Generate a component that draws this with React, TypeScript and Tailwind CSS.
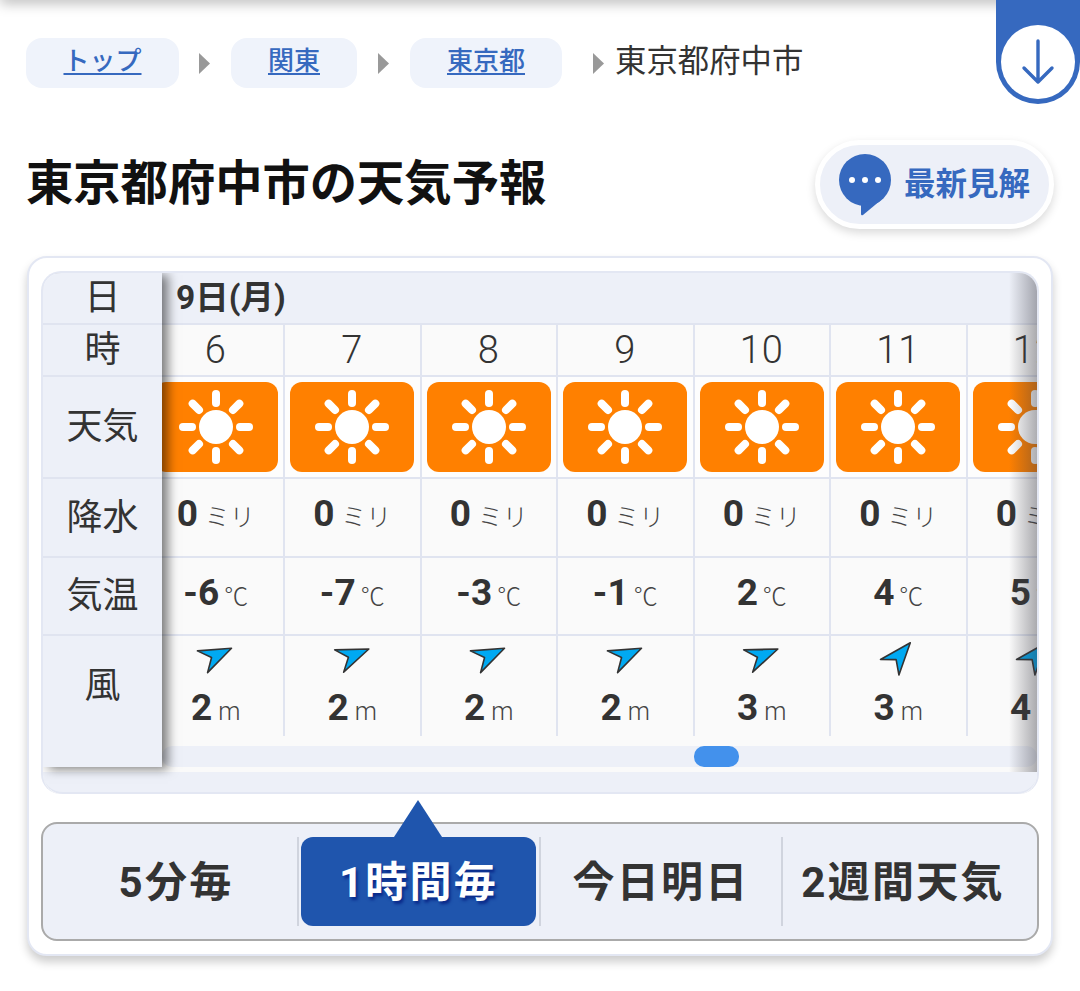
import React from 'react';

const hours = [
  { hour: '6', temp: '-6', wind: '2', deg: 65 },
  { hour: '7', temp: '-7', wind: '2', deg: 68 },
  { hour: '8', temp: '-3', wind: '2', deg: 65 },
  { hour: '9', temp: '-1', wind: '2', deg: 65 },
  { hour: '10', temp: '2', wind: '3', deg: 68 },
  { hour: '11', temp: '4', wind: '3', deg: 40 },
  { hour: '12', temp: '5', wind: '4', deg: 40 },
];

function Sun() {
  const rays = [0, 45, 90, 135, 180, 225, 270, 315];
  return (
    <svg width="76" height="76" viewBox="-38 -38 76 76">
      <circle r="17" fill="#fff" />
      {rays.map((r) => (
        <line key={r} x1="0" y1="-33" x2="0" y2="-24" stroke="#fff" strokeWidth="8" strokeLinecap="round" transform={`rotate(${r})`} />
      ))}
    </svg>
  );
}

function WindArrow({ deg }: { deg: number }) {
  return (
    <svg width="44" height="44" viewBox="-22 -22 44 44" className="block">
      <path d="M0 -16 L12 16 L0 6 L-12 16 Z" fill="#00a9f2" stroke="#333" strokeWidth="1.6" strokeLinejoin="round" transform={`rotate(${deg})`} />
    </svg>
  );
}

function Chevron() {
  return (
    <svg width="11" height="21" viewBox="0 0 11 21" className="shrink-0">
      <path d="M0 0 L11 10.5 L0 21 Z" fill="#999" />
    </svg>
  );
}

function Crumb({ label, width }: { label: string; width: string }) {
  return (
    <a className={`${width} h-[50px] rounded-[16px] bg-[#eff3fb] flex items-center justify-center pb-[3px] text-[26px] font-medium text-[#3669bf] underline underline-offset-[3px]`}>
      {label}
    </a>
  );
}

export default function App() {
  return (
    <div className="relative h-[991px] w-[1080px] overflow-hidden bg-white font-['Roboto','Noto_Sans_CJK_JP',sans-serif] text-[#333]">
      <div className="absolute -top-[10px] left-0 h-[10px] w-full shadow-[0_2px_14px_rgba(0,0,0,0.35)]" />

      <div className="absolute right-0 top-0 h-[104px] w-[84px] rounded-b-[42px] bg-[#3669bf]">
        <div className="absolute left-[5px] top-[25px] flex h-[74px] w-[74px] items-center justify-center rounded-full bg-white">
          <svg width="34" height="46" viewBox="0 0 34 46" fill="none" stroke="#3669bf" strokeWidth="3.4" strokeLinecap="round" strokeLinejoin="round">
            <path d="M17 2 V43 M3 29 L17 43 L31 29" />
          </svg>
        </div>
      </div>

      <nav className="flex items-center pl-[26px] pt-[38px]">
        <Crumb label="トップ" width="w-[153px]" />
        <div className="ml-[20px] mr-[21px]"><Chevron /></div>
        <Crumb label="関東" width="w-[126px]" />
        <div className="ml-[21px] mr-[21px]"><Chevron /></div>
        <Crumb label="東京都" width="w-[152px]" />
        <div className="ml-[31px] mr-[11px]"><Chevron /></div>
        <span className="pb-[2px] text-[31.4px] leading-none">東京都府中市</span>
      </nav>

      <div className="mt-[52px] flex h-[89px] items-center justify-between pl-[26px] pr-[26px]">
        <h1 className="text-[47.3px] font-bold leading-none text-[#111]">東京都府中市の天気予報</h1>
        <a className="flex h-[89px] w-[239px] items-center gap-[13px] rounded-full border-[5px] border-white bg-[#edf0f8] pl-[19px] shadow-[0_4px_10px_rgba(0,0,0,0.15)]">
          <svg width="52" height="62" viewBox="0 0 52 62">
            <circle cx="26" cy="26" r="26" fill="#3669bf" />
            <path d="M22 48 L22 60 Q22 62 24 61 L42 46 Z" fill="#3669bf" />
            <circle cx="13" cy="26" r="3" fill="#fff" />
            <circle cx="26" cy="26" r="3" fill="#fff" />
            <circle cx="39" cy="26" r="3" fill="#fff" />
          </svg>
          <span className="text-[31.5px] font-bold leading-none text-[#3669bf]">最新見解</span>
        </a>
      </div>

      <section className="mx-[27px] mt-[27px] rounded-[20px] border-2 border-[#e3e7f3] bg-white px-[12px] py-[13px] shadow-[0_6px_10px_rgba(0,0,0,0.2)]">
        <div className="relative h-[523px] overflow-hidden rounded-[20px] border-2 border-b-0 border-[#e3e7f3] bg-[#fafafa]">
          <div className="flex h-[494px]">
            {/* fixed label column */}
            <div className="relative z-20 w-[119px] shrink-0 bg-[#edf0f8] text-center text-[36px] leading-none shadow-[6px_2px_10px_rgba(0,0,0,0.5)]">
              <div className="flex h-[52px] items-center justify-center border-b-2 border-[#e0e4f0]">日</div>
              <div className="flex h-[52px] items-center justify-center border-b-2 border-[#e0e4f0]">時</div>
              <div className="flex h-[102px] items-center justify-center border-b-2 border-[#e0e4f0]">天気</div>
              <div className="flex h-[79px] items-center justify-center border-b-2 border-[#e0e4f0]">降水</div>
              <div className="flex h-[78px] items-center justify-center border-b-2 border-[#e0e4f0]">気温</div>
              <div className="flex h-[100px] items-center justify-center">風</div>
            </div>

            {/* scrolled hour columns */}
            <div className="relative min-w-0 flex-1 overflow-hidden">
              <div className="flex h-[52px] items-center border-b-2 border-[#e0e4f0] bg-[#edf0f8] pl-[14px] text-[33.5px] font-bold leading-none">9日(月)</div>
              <div className="-ml-[13.5px] flex w-[1100px]">
                {hours.map((h) => (
                  <div key={h.hour} className="h-[311px] w-[136.5px] shrink-0 text-center">
                    <div className="border-r-2 border-[#e0e4f0]">
                      <div className="flex h-[52px] items-center justify-center border-b-2 border-[#e0e4f0] text-[38px] font-light leading-none tracking-[1px]">{h.hour}</div>
                      <div className="flex h-[102px] items-center justify-center border-b-2 border-[#e0e4f0] bg-[#fdfdfd]">
                        <div className="flex h-[90px] w-[124px] items-center justify-center rounded-[12px] bg-[#ff8000]"><Sun /></div>
                      </div>
                      <div className="flex h-[79px] items-baseline justify-center gap-[7px] border-b-2 border-[#e0e4f0] pt-[16px] leading-none">
                        <span className="text-[37px] font-bold">0</span>
                        <span className="text-[25px] font-light text-[#444]">ミリ</span>
                      </div>
                      <div className="flex h-[78px] items-baseline justify-center gap-[5px] border-b-2 border-[#e0e4f0] pt-[16px] leading-none">
                        <span className="text-[37px] font-bold">{h.temp}</span>
                        <span className="text-[24px] font-light text-[#444]">℃</span>
                      </div>
                      <div className="flex h-[100px] flex-col">
                        <div className="-mt-[3px] flex justify-center pl-[3px]"><WindArrow deg={h.deg} /></div>
                        <div className="mt-[12px] flex items-baseline justify-center gap-[6px] leading-none">
                          <span className="text-[37px] font-bold">{h.wind}</span>
                          <span className="text-[25px] font-light text-[#444]">m</span>
                        </div>
                      </div>
                    </div>
                  </div>
                ))}
              </div>
            </div>
          </div>

          {/* scrollbar */}
          <div className="absolute bottom-[27px] left-[119px] right-0 h-[21px] rounded-[10px] bg-[#edf0f8]">
            <div className="absolute left-[532px] top-0 h-[21px] w-[45px] rounded-[10px] bg-[#4391ec]" />
          </div>
          <div className="absolute bottom-0 left-0 right-0 h-[22px] rounded-b-[20px] border-b-2 border-[#e3e7f3] bg-[#edf0f8]" />

          {/* edge shadows */}
          <div className="pointer-events-none absolute bottom-[22px] right-0 top-0 z-10 w-[28px] bg-gradient-to-r from-transparent to-[rgba(60,60,70,0.42)]" />
        </div>

        <div className="relative mt-[28px] flex h-[119px] items-center rounded-[16px] border-2 border-[#aaa] bg-[#edf0f8] text-[42px] font-bold leading-none tracking-[2.25px]">
          <div className="flex h-[89px] w-[256px] items-center justify-center border-r-2 border-[#d0d4de] pl-[12px] pt-[3px]">5分毎</div>
          <div className="relative flex h-[89px] w-[242px] items-center justify-center border-r-2 border-[#d0d4de] pl-[2px] pr-[3px]">
            <div className="absolute -top-[37px] left-[95px] h-[37px] w-[48px] bg-[#1f55ad] [clip-path:polygon(50%_0,100%_100%,0_100%)]" />
            <div className="flex h-full w-full items-center justify-center rounded-[12px] bg-[#1f55ad] pt-[3px] text-white [text-shadow:2px_3px_3px_#0a2a8a]">1時間毎</div>
          </div>
          <div className="flex h-[89px] w-[242px] items-center justify-center border-r-2 border-[#d0d4de] pt-[3px]">今日明日</div>
          <div className="flex h-[89px] flex-1 items-center justify-center pr-[14px] pt-[3px]">2週間天気</div>
        </div>
      </section>
    </div>
  );
}
